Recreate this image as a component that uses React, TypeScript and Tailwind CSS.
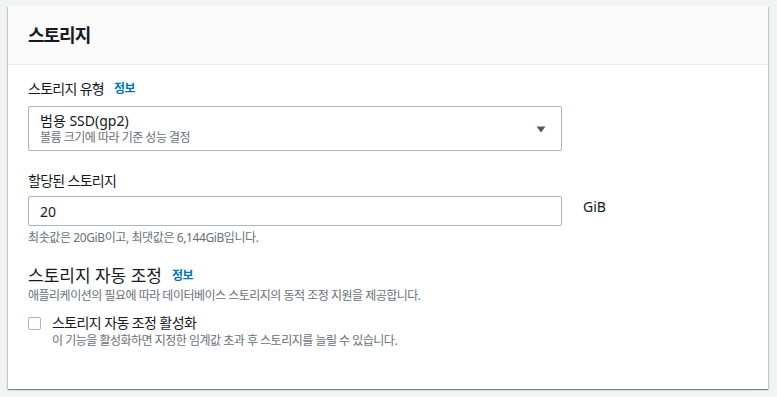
const FONT = { fontFamily: '"Noto Sans", "Noto Sans CJK KR", sans-serif' };

const InfoLink = () => (
  <span className="ml-[10px] text-[12px] font-bold text-[#0073bb] tracking-[-0.5px]">정보</span>
);

export default function App() {
  return (
    <div className="w-[777px] h-[397px] bg-[#f2f3f3] pl-[8px] pt-[6px] overflow-hidden" style={FONT}>
      <div className="w-[760px] h-[383px] bg-white shadow-[0_1px_1px_0_rgba(0,28,36,0.3),1px_1px_1px_0_rgba(0,28,36,0.15),-1px_1px_1px_0_rgba(0,28,36,0.15)]">
        {/* header */}
        <div className="h-[59px] bg-[#fafafa] border-b border-[#eaeded] px-[20px] flex items-center">
          <h2 className="text-[18px] font-bold text-[#16191f] leading-[22px] tracking-[-1px]">스토리지</h2>
        </div>

        <div className="px-[20px] pt-[13px] text-[#16191f]">
          {/* storage type */}
          <div className="flex items-center text-[14px] leading-[22px]">
            <span className="tracking-[-0.7px]">스토리지 유형</span>
            <InfoLink />
          </div>
          <div className="mt-[6px] w-[534px] h-[45px] border border-[#aab7b8] rounded-[2px] pl-[11px] pr-[15px] flex items-center justify-between">
            <div className="flex flex-col">
              <span className="text-[14px] leading-[18px]">범용 SSD(gp2)</span>
              <span className="text-[12px] leading-[16px] text-[#687078] tracking-[-0.5px]">볼륨 크기에 따라 기준 성능 결정</span>
            </div>
            <svg width="10" height="7" viewBox="0 0 10 7" className="mt-[1px]">
              <path d="M0.5 0.5 L9.5 0.5 L5 6.5 Z" fill="#545b64" />
            </svg>
          </div>

          {/* allocated storage */}
          <div className="mt-[19px] text-[14px] leading-[22px] tracking-[-0.7px]">할당된 스토리지</div>
          <div className="mt-[4px] flex items-start">
            <div className="w-[534px] h-[30px] border border-[#aab7b8] rounded-[2px] pl-[11px] flex items-center text-[14px]">
              20
            </div>
            <span className="ml-[21px] text-[14px] leading-[22px]">GiB</span>
          </div>
          <div className="mt-[4px] text-[12px] leading-[16px] text-[#687078] tracking-[-0.4px]">
            최솟값은 20GiB이고, 최댓값은 6,144GiB입니다.
          </div>

          {/* autoscaling */}
          <div className="mt-[19px] flex items-center">
            <span className="text-[17px] leading-[22px]">스토리지 자동 조정</span>
            <InfoLink />
          </div>
          <div className="mt-[1px] text-[12px] leading-[16px] text-[#687078] tracking-[-0.5px]">
            애플리케이션의 필요에 따라 데이터베이스 스토리지의 동적 조정 지원을 제공합니다.
          </div>
          <div className="mt-[9px] flex items-start">
            <div className="mt-[4px] w-[13px] h-[13px] border border-[#aab7b8] rounded-[2px] bg-white shrink-0" />
            <div className="ml-[11px] flex flex-col">
              <span className="text-[14px] leading-[20px] tracking-[-0.6px]">스토리지 자동 조정 활성화</span>
              <span className="text-[12px] leading-[16px] text-[#687078] tracking-[-0.5px]">
                이 기능을 활성화하면 지정한 임계값 초과 후 스토리지를 늘릴 수 있습니다.
              </span>
            </div>
          </div>
        </div>
      </div>
    </div>
  );
}
